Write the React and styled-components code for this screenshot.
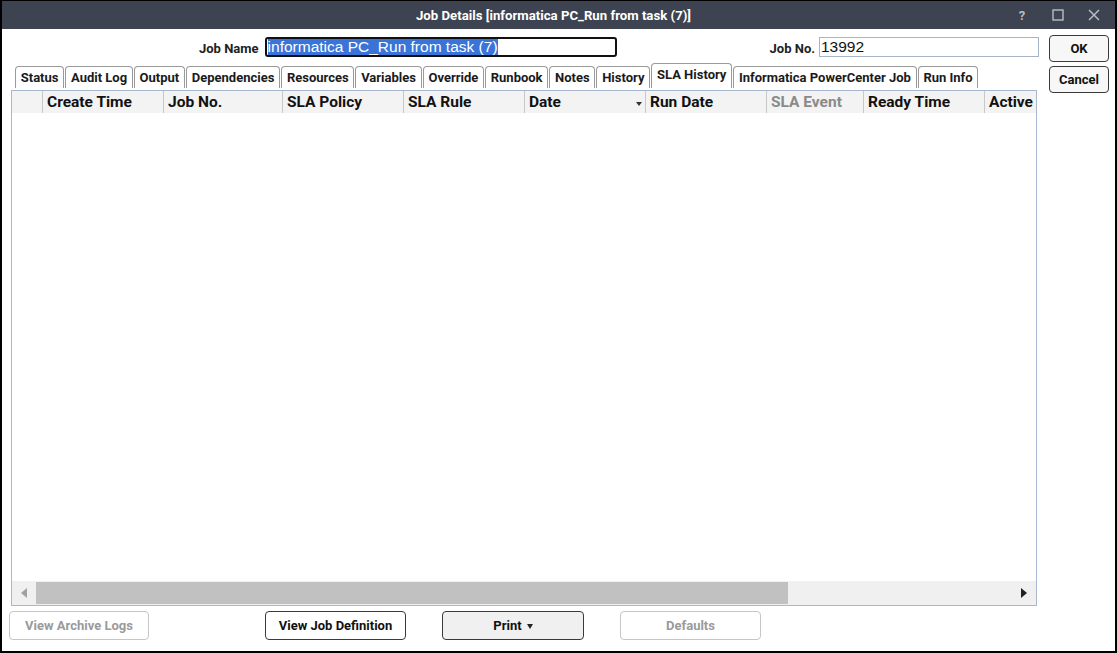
import React from 'react'
import styled, { createGlobalStyle } from 'styled-components'

const GlobalStyle = createGlobalStyle`
  html, body { margin: 0; padding: 0; background: #fff; }
  body { font-family: Roboto, "Liberation Sans", Arial, sans-serif; }
  * { box-sizing: border-box; }
`

const Window = styled.div`
  width: 1117px;
  height: 653px;
  border: 2px solid #000;
  border-top: 1px solid #000;
  display: flex;
  flex-direction: column;
  background: #fff;
`

const TitleBar = styled.div`
  height: 28px;
  background: #3d4350;
  color: #fff;
  display: flex;
  align-items: center;
  justify-content: center;
  position: relative;
  padding-right: 10px;
  font-size: 13.2px;
  font-weight: 700;
`

const Controls = styled.div`
  position: absolute;
  right: 14px;
  top: 0;
  height: 28px;
  display: flex;
  align-items: center;
  gap: 22px;
  color: #b8bcc4;
`

const Ctl = styled.span`
  display: flex;
  align-items: center;
  justify-content: center;
  width: 14px;
  font-size: 13px;
  font-weight: 700;
`

const Body = styled.div`
  flex: 1;
  display: flex;
  padding: 0 0 0 7px;
`

const Main = styled.div`
  width: 1030px;
  display: flex;
  flex-direction: column;
`

const Side = styled.div`
  display: flex;
  flex-direction: column;
  gap: 4px;
  padding: 6px 0 0 10px;
`

const FieldRow = styled.div`
  display: flex;
  align-items: center;
  height: 20px;
  margin-top: 8px;
  padding-left: 190px;
`

const Label = styled.label`
  font-size: 13px;
  font-weight: 700;
  color: #222;
  margin-right: ${p => p.gap || 6}px;
  margin-top: 3px;
`

const Input = styled.div`
  width: ${p => p.w}px;
  height: 20px;
  border: ${p => (p.focused ? '2px solid #111' : '1px solid #a6b4c8')};
  border-radius: ${p => (p.focused ? '3px' : '0')};
  font-family: "Liberation Sans", Arial, sans-serif;
  font-size: 15.5px;
  color: #111;
  display: flex;
  align-items: center;
  padding-left: 1px;
  overflow: hidden;
  white-space: nowrap;
`

const Selected = styled.span`
  background: #3a74d8;
  color: #fff;
  line-height: 16px;
`

const Spacer = styled.div`
  flex: 1;
`

const Tabs = styled.div`
  display: flex;
  align-items: flex-end;
  height: 25px;
  margin-top: 6px;
  padding-left: 6px;
`

const Tab = styled.div`
  height: ${p => (p.active ? 25 : 22)}px;
  padding: 0 4.75px;
  margin-right: 1px;
  border: 1px solid #9a9a9a;
  border-bottom: none;
  border-radius: 4px 4px 0 0;
  background: #fff;
  font-size: 13px;
  font-weight: 700;
  color: #1a1a1a;
  display: flex;
  align-items: ${p => (p.active ? 'flex-start' : 'center')};
  padding-top: ${p => (p.active ? 3 : 0)}px;
  white-space: nowrap;
`

const Panel = styled.div`
  margin-top: 2px;
  margin-left: 2px;
  width: 1026px;
  height: 516px;
  border: 1px solid #a8b8d0;
  display: flex;
  flex-direction: column;
  overflow: hidden;
`

const HeaderRow = styled.div`
  display: flex;
  height: 22px;
  background: #f3f3f3;
`

const HeadCell = styled.div`
  width: ${p => p.w}px;
  flex-shrink: 0;
  border-left: ${p => (p.first ? 'none' : '1px solid #c8c8c8')};
  padding-left: 4px;
  padding-bottom: 1px;
  font-size: 15.5px;
  font-weight: 700;
  color: ${p => (p.muted ? '#8a8a8a' : '#111')};
  display: flex;
  align-items: center;
  justify-content: space-between;
  white-space: nowrap;
`

const SortArrow = styled.span`
  width: 0;
  height: 0;
  border-left: 3.5px solid transparent;
  border-right: 3.5px solid transparent;
  border-top: 4px solid #333;
  margin: 4px 3px 0 0;
`

const Rows = styled.div`
  flex: 1;
`

const HScroll = styled.div`
  height: 24px;
  background: #f0f0f0;
  display: flex;
  align-items: center;
`

const ScrollArrow = styled.div`
  width: 24px;
  display: flex;
  justify-content: center;
  svg { display: block; }
`

const Track = styled.div`
  flex: 1;
  height: 22px;
  display: flex;
`

const Thumb = styled.div`
  height: 100%;
  background: #c1c1c1;
`

const ButtonRow = styled.div`
  display: flex;
  margin-top: 5px;
  padding-left: 0;
`

const Button = styled.button`
  width: ${p => p.w || 141}px;
  height: 29px;
  margin-left: ${p => p.ml || 0}px;
  border-radius: 4px;
  border: 1px solid ${p => (p.disabled ? '#c6c6c6' : '#3a3a3a')};
  background: ${p => (p.tinted ? '#f0f0f0' : '#fff')};
  color: ${p => (p.disabled ? '#9a9a9a' : '#111')};
  font-family: Roboto, "Liberation Sans", Arial, sans-serif;
  font-size: 13px;
  font-weight: 700;
  display: flex;
  align-items: center;
  justify-content: center;
  gap: 5px;
  padding: 0;
`

const SideButton = styled(Button)`
  width: 60px;
  height: 27px;
  background: #f7f7f7;
`

const Caret = styled.span`
  width: 0;
  height: 0;
  border-left: 3.5px solid transparent;
  border-right: 3.5px solid transparent;
  border-top: 5px solid #222;
  margin-top: 2px;
`

const tabs = [
  'Status', 'Audit Log', 'Output', 'Dependencies', 'Resources', 'Variables',
  'Override', 'Runbook', 'Notes', 'History', 'SLA History',
  'Informatica PowerCenter Job', 'Run Info',
]

const columns = [
  { label: '', w: 30 },
  { label: 'Create Time', w: 121 },
  { label: 'Job No.', w: 119 },
  { label: 'SLA Policy', w: 121 },
  { label: 'SLA Rule', w: 121 },
  { label: 'Date', w: 121, sort: true },
  { label: 'Run Date', w: 121 },
  { label: 'SLA Event', w: 97, muted: true },
  { label: 'Ready Time', w: 121 },
  { label: 'Active', w: 80 },
]

export default function App() {
  return (
    <>
      <GlobalStyle />
      <Window>
        <TitleBar>
          Job Details [informatica PC_Run from task (7)]
          <Controls>
            <Ctl>?</Ctl>
            <Ctl>
              <svg width="12" height="12" viewBox="0 0 12 12">
                <rect x="1" y="1" width="10" height="10" fill="none" stroke="currentColor" strokeWidth="1.4" />
              </svg>
            </Ctl>
            <Ctl>
              <svg width="12" height="12" viewBox="0 0 12 12">
                <path d="M1 1 L11 11 M11 1 L1 11" stroke="currentColor" strokeWidth="1.5" />
              </svg>
            </Ctl>
          </Controls>
        </TitleBar>
        <Body>
          <Main>
            <FieldRow>
              <Label>Job Name</Label>
              <Input w={352} focused>
                <Selected>informatica PC_Run from task (7)</Selected>
              </Input>
              <Spacer />
              <Label gap={4}>Job No.</Label>
              <Input w={220}>13992</Input>
            </FieldRow>
            <Tabs>
              {tabs.map(t => (
                <Tab key={t} active={t === 'SLA History'}>{t}</Tab>
              ))}
            </Tabs>
            <Panel>
              <HeaderRow>
                {columns.map((c, i) => (
                  <HeadCell key={i} w={c.w} first={i === 0} muted={c.muted}>
                    {c.label}
                    {c.sort && <SortArrow />}
                  </HeadCell>
                ))}
              </HeaderRow>
              <Rows />
              <HScroll>
                <ScrollArrow>
                  <svg width="6" height="10" viewBox="0 0 6 10"><path d="M6 0 L0 5 L6 10 Z" fill="#a0a0a0" /></svg>
                </ScrollArrow>
                <Track>
                  <Thumb style={{ width: '77%' }} />
                </Track>
                <ScrollArrow>
                  <svg width="6" height="10" viewBox="0 0 6 10"><path d="M0 0 L6 5 L0 10 Z" fill="#222" /></svg>
                </ScrollArrow>
              </HScroll>
            </Panel>
            <ButtonRow>
              <Button disabled w={140}>View Archive Logs</Button>
              <Button ml={116}>View Job Definition</Button>
              <Button ml={36} w={142} tinted>Print <Caret /></Button>
              <Button ml={36} disabled>Defaults</Button>
            </ButtonRow>
          </Main>
          <Side>
            <SideButton>OK</SideButton>
            <SideButton>Cancel</SideButton>
          </Side>
        </Body>
      </Window>
    </>
  )
}
